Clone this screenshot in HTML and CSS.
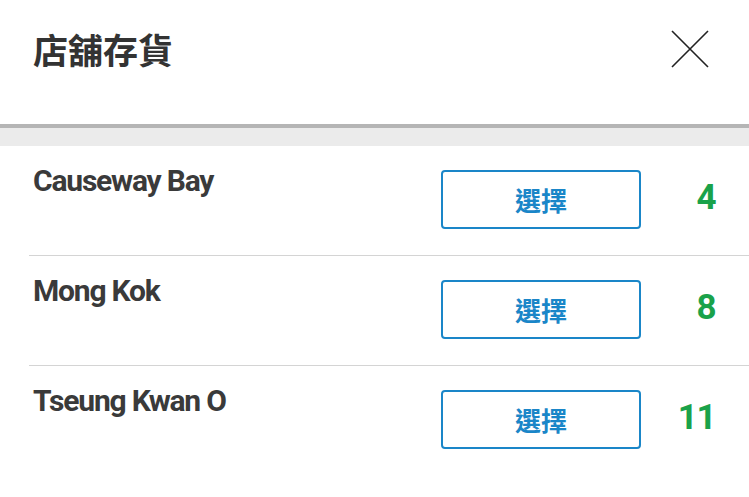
FILE: index.html
```html
<!DOCTYPE html>
<html>
<head>
<title>店舖存貨</title>
<meta charset="UTF-8">
<meta name="viewport" content="width=device-width, initial-scale=1">
<link rel="stylesheet" href="styles.css">
</head>
<body>

<!-- 標題 -->
<div class="header">
    <h1 class="title">店舖存貨</h1>
    <a class="close" href="javascript:;">
        <svg width="40" height="40" viewBox="0 0 40 40">
            <path d="M2 2 L38 38 M38 2 L2 38" stroke="#222" stroke-width="1.6" fill="none"/>
        </svg>
    </a>
</div>

<div class="bar"></div>

<!-- 店舖列表 -->
<ul class="store-list">
    <li class="store">
        <div class="info">
            <div class="name">Causeway Bay</div>
        </div>
        <a class="pick" href="javascript:;">選擇</a>
        <div class="qty">4</div>
    </li>
    <li class="store">
        <div class="info">
            <div class="name">Mong Kok</div>
        </div>
        <a class="pick" href="javascript:;">選擇</a>
        <div class="qty">8</div>
    </li>
    <li class="store">
        <div class="info">
            <div class="name">Tseung Kwan O</div>
        </div>
        <a class="pick" href="javascript:;">選擇</a>
        <div class="qty">11</div>
    </li>
</ul>

</body>
</html>
```
FILE: styles.css
```css
body {
    margin: 0;
    background: #fff;
    font-family: Roboto, "Noto Sans CJK TC", sans-serif;
}

/* 標題 */
.header {
    height: 124px;
    display: flex;
    align-items: center;
    justify-content: space-between;
    padding: 0 39px 0 33px;
}

.title {
    margin: 0 0 28px 0;
    font-family: "Noto Sans CJK TC", sans-serif;
    font-size: 35px;
    font-weight: 700;
    color: #333;
}

.close {
    display: block;
    width: 40px;
    height: 40px;
    margin-bottom: 26px;
}

/* 分隔條 */
.bar {
    height: 18px;
    border-top: 4px solid #b5b5b5;
    background: #ebebeb;
}

/* 店舖列表 */
.store-list {
    list-style: none;
    margin: 0;
    padding: 0;
}

.store {
    display: flex;
    align-items: flex-start;
    height: 109px;
    margin-left: 29px;
    padding-right: 34px;
    border-bottom: 1px solid #d4d4d4;
}

.store:last-child {
    border-bottom: none;
}

.info {
    flex: 1;
    padding: 17px 0 0 4px;
}

.name {
    font-size: 30px;
    font-weight: 700;
    color: #3a3a3a;
    letter-spacing: -1.2px;
}

.pick {
    display: flex;
    align-items: center;
    justify-content: center;
    width: 196px;
    height: 55px;
    margin-top: 24px;
    border: 2px solid #1a86c8;
    border-radius: 4px;
    text-decoration: none;
    font-family: "Noto Sans CJK TC", sans-serif;
    font-size: 26px;
    font-weight: 700;
    color: #1a86c8;
}

.qty {
    width: 74px;
    margin-top: 31px;
    text-align: right;
    font-size: 35px;
    font-weight: 700;
    color: #1aa24a;
    letter-spacing: -1.5px;
}
```
